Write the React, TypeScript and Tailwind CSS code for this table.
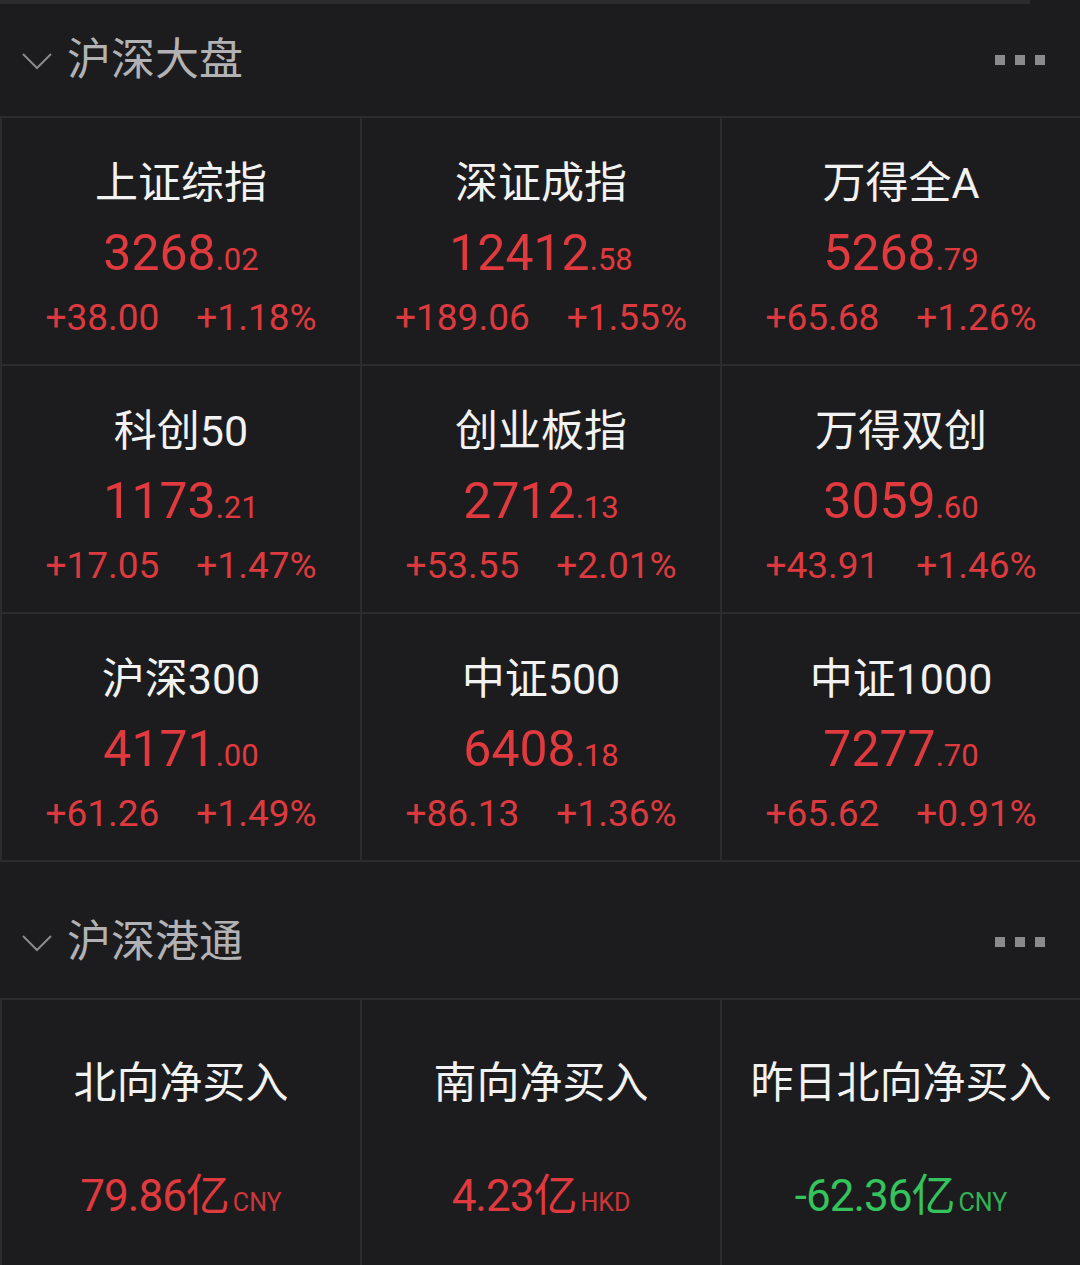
const font = { fontFamily: "Roboto, 'Noto Sans CJK SC', sans-serif" };

const indices = [
  { name: "上证综指", int: "3268", dec: ".02", chg: "+38.00", pct: "+1.18%" },
  { name: "深证成指", int: "12412", dec: ".58", chg: "+189.06", pct: "+1.55%" },
  { name: "万得全A", int: "5268", dec: ".79", chg: "+65.68", pct: "+1.26%" },
  { name: "科创50", int: "1173", dec: ".21", chg: "+17.05", pct: "+1.47%" },
  { name: "创业板指", int: "2712", dec: ".13", chg: "+53.55", pct: "+2.01%" },
  { name: "万得双创", int: "3059", dec: ".60", chg: "+43.91", pct: "+1.46%" },
  { name: "沪深300", int: "4171", dec: ".00", chg: "+61.26", pct: "+1.49%" },
  { name: "中证500", int: "6408", dec: ".18", chg: "+86.13", pct: "+1.36%" },
  { name: "中证1000", int: "7277", dec: ".70", chg: "+65.62", pct: "+0.91%" },
];

const flows = [
  { name: "北向净买入", value: "79.86亿", unit: "CNY", up: true },
  { name: "南向净买入", value: "4.23亿", unit: "HKD", up: true },
  { name: "昨日北向净买入", value: "-62.36亿", unit: "CNY", up: false },
];

function SectionHeader({ title }: { title: string }) {
  return (
    <div className="flex h-[112px] items-center justify-between pl-[22px] pr-[35px]">
      <div className="flex items-center gap-[15px]">
        <svg width="30" height="18" viewBox="0 0 30 18" className="mt-[2px]">
          <polyline points="1,2 15,16 29,2" fill="none" stroke="#8a8a8c" strokeWidth="2" />
        </svg>
        <span className="text-[44px] leading-none text-[#b2b2b4]">{title}</span>
      </div>
      <div className="flex gap-[10px]">
        <span className="size-[10px] bg-[#8a8a8c]" />
        <span className="size-[10px] bg-[#8a8a8c]" />
        <span className="size-[10px] bg-[#8a8a8c]" />
      </div>
    </div>
  );
}

export default function App() {
  return (
    <div className="min-h-[1265px] w-[1080px] overflow-hidden bg-[#1c1c1e]" style={font}>
      <div className="h-[4px] w-[1030px] bg-[#2b2b2d]" />
      <SectionHeader title="沪深大盘" />

      <div className="grid grid-cols-3 gap-[2px] bg-[#2c2c2e] py-[2px] pl-[2px]">
        {indices.map((i) => (
          <div key={i.name} className="flex h-[246px] flex-col items-center bg-[#1c1c1e] pt-[40px]">
            <div className="text-[43px] leading-[50px] text-[#f2f2f2]">{i.name}</div>
            <div className="mt-[15px] flex h-[60px] items-baseline leading-[60px] text-[#e0393e]">
              <span className="text-[50px]">{i.int}</span>
              <span className="text-[31px]">{i.dec}</span>
            </div>
            <div className="mt-[13px] flex gap-[37px] text-[37px] leading-[44px] text-[#dd3a3f]">
              <span>{i.chg}</span>
              <span>{i.pct}</span>
            </div>
          </div>
        ))}
      </div>

      <div className="mt-[24px]">
        <SectionHeader title="沪深港通" />
      </div>

      <div className="grid grid-cols-3 gap-[2px] bg-[#2c2c2e] pt-[2px] pl-[2px]">
        {flows.map((f) => (
          <div key={f.name} className="flex h-[270px] flex-col items-center bg-[#1c1c1e] pt-[58px]">
            <div className="text-[43px] leading-[50px] text-[#f2f2f2]">{f.name}</div>
            <div
              className={
                f.up
                  ? "mt-[58px] flex items-baseline gap-[4px] leading-[60px] text-[#e0393e]"
                  : "mt-[58px] flex items-baseline gap-[4px] leading-[60px] text-[#34c35c]"
              }
            >
              <span className="text-[44px] tracking-[-1px]">{f.value}</span>
              <span className="text-[25px] opacity-90">{f.unit}</span>
            </div>
          </div>
        ))}
      </div>
    </div>
  );
}
